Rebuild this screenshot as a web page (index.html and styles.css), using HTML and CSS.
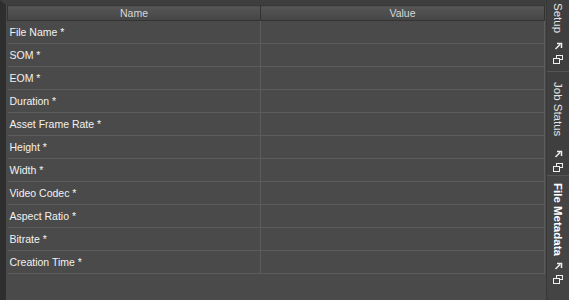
FILE: index.html
```html
<!DOCTYPE html>
<html lang="en">
<head>
    <meta charset="UTF-8">
    <title>File Metadata</title>
    <link rel="stylesheet" href="styles.css">
</head>
<body>
    <div class="frame">
        <div class="main">
            <table class="meta">
                <thead>
                    <tr>
                        <th class="col-name">Name</th>
                        <th>Value</th>
                    </tr>
                </thead>
                <tbody>
                    <tr><td>File Name *</td><td></td></tr>
                    <tr><td>SOM *</td><td></td></tr>
                    <tr><td>EOM *</td><td></td></tr>
                    <tr><td>Duration *</td><td></td></tr>
                    <tr><td>Asset Frame Rate *</td><td></td></tr>
                    <tr><td>Height *</td><td></td></tr>
                    <tr><td>Width *</td><td></td></tr>
                    <tr><td>Video Codec *</td><td></td></tr>
                    <tr><td>Aspect Ratio *</td><td></td></tr>
                    <tr><td>Bitrate *</td><td></td></tr>
                    <tr><td>Creation Time *</td><td></td></tr>
                </tbody>
            </table>
        </div>

        <div class="side">
            <div class="tab tab-setup">
                <span class="tab-label">Setup</span>
                <span class="tab-icons">
                    <svg class="ic" width="9" height="8" viewBox="0 0 9 8"><path d="M1.5 7 L6 2.5 M3 1.5 H7.5 V6" stroke="#eee" stroke-width="1.5" fill="none"/></svg>
                    <svg class="ic" width="10" height="9" viewBox="0 0 10 9"><rect x="3.5" y="0.5" width="6" height="4" fill="none" stroke="#eee"/><rect x="0.5" y="3.5" width="6" height="5" fill="#404040" stroke="#eee"/></svg>
                </span>
            </div>
            <div class="tab tab-job">
                <span class="tab-label">Job Status</span>
                <span class="tab-icons">
                    <svg class="ic" width="9" height="8" viewBox="0 0 9 8"><path d="M1.5 7 L6 2.5 M3 1.5 H7.5 V6" stroke="#eee" stroke-width="1.5" fill="none"/></svg>
                    <svg class="ic" width="10" height="9" viewBox="0 0 10 9"><rect x="3.5" y="0.5" width="6" height="4" fill="none" stroke="#eee"/><rect x="0.5" y="3.5" width="6" height="5" fill="#404040" stroke="#eee"/></svg>
                </span>
            </div>
            <div class="tab tab-meta active">
                <span class="tab-label">File Metadata</span>
                <span class="tab-icons">
                    <svg class="ic" width="9" height="8" viewBox="0 0 9 8"><path d="M1.5 7 L6 2.5 M3 1.5 H7.5 V6" stroke="#eee" stroke-width="1.5" fill="none"/></svg>
                    <svg class="ic" width="10" height="9" viewBox="0 0 10 9"><rect x="3.5" y="0.5" width="6" height="4" fill="none" stroke="#eee"/><rect x="0.5" y="3.5" width="6" height="5" fill="#444" stroke="#eee"/></svg>
                </span>
            </div>
        </div>
    </div>
</body>
</html>
```

FILE: styles.css
```css
body {
    margin: 0;
    font-family: "Liberation Sans", Arial, sans-serif;
    background-color: #444;
    color: #f2f2f2;
}

.frame {
    display: flex;
    width: 569px;
    height: 300px;
    overflow: hidden;
}

.main {
    flex: 1;
    background-color: #4a4a4a;
    border-left: 6px solid #2e2e2e;
    border-top: 5px solid #3e3e3e;
    padding: 0 1px 0 1px;
}

table.meta {
    width: 538px;
    border-collapse: collapse;
    font-size: 10.5px;
}

.meta th {
    height: 14px;
    padding: 0;
    font-weight: normal;
    color: #d8d8d8;
    background: linear-gradient(#565656, #454545);
    border: 1px solid #333;
    border-top-color: #3a3a3a;
    line-height: 13px;
}

.meta th.col-name {
    width: 252px;
}

.meta td {
    height: 22px;
    padding: 0 0 0 2px;
    border: 1px solid #5c5c5c;
    border-top: none;
    text-align: left;
}

.meta td:first-child {
    border-left: none;
}

.side {
    width: 22px;
    background-color: #3f3f3f;
    display: flex;
    flex-direction: column;
    border-left: 1px solid #383838;
}

.tab {
    display: flex;
    flex-direction: column;
    align-items: center;
    box-sizing: border-box;
    border-bottom: 1px solid #555;
}

.tab-label {
    writing-mode: vertical-rl;
    white-space: nowrap;
    font-size: 11.5px;
    color: #e4e4e4;
}

.tab-icons {
    display: flex;
    flex-direction: column;
    align-items: center;
    gap: 5px;
    margin-top: 9px;
}

.ic {
    display: block;
}

.tab-setup {
    height: 72px;
    padding-top: 3px;
}

.tab-job {
    height: 104px;
    padding-top: 10px;
}

.tab-job .tab-icons {
    margin-top: 14px;
}

.tab-meta {
    flex: 1;
    padding-top: 7px;
    border-bottom: none;
    border-radius: 0 0 0 6px;
    background-color: #444;
}

.tab-meta .tab-icons {
    margin-top: 6px;
}

.tab.active .tab-label {
    font-weight: bold;
    color: #fff;
}
```
